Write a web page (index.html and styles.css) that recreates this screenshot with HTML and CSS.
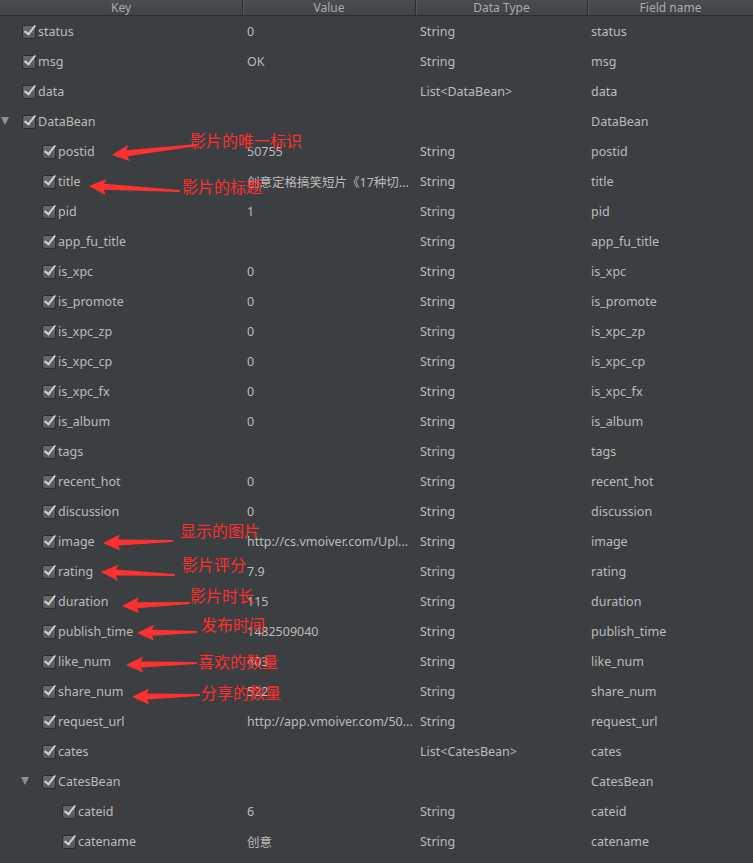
FILE: index.html
```html
<!DOCTYPE html>
<html>
<head>
<meta charset="utf-8">
<link rel="stylesheet" href="styles.css">
</head>
<body>
<div class="page">
  <div class="table">
    <div class="hdr"><div class="hc">Key</div><div class="hc">Value</div><div class="hc">Data Type</div><div class="hc">Field name</div></div>

    <div class="row"><div class="key l0"><span class="tog"></span><span class="cb"></span>status</div><div class="cell">0</div><div class="cell">String</div><div class="cell">status</div></div>
    <div class="row"><div class="key l0"><span class="tog"></span><span class="cb"></span>msg</div><div class="cell">OK</div><div class="cell">String</div><div class="cell">msg</div></div>
    <div class="row"><div class="key l0"><span class="tog"></span><span class="cb"></span>data</div><div class="cell"></div><div class="cell">List&lt;DataBean&gt;</div><div class="cell">data</div></div>
    <div class="row"><div class="key l0"><span class="tog open"></span><span class="cb"></span>DataBean</div><div class="cell"></div><div class="cell"></div><div class="cell">DataBean</div></div>

    <div class="row"><div class="key l1"><span class="tog"></span><span class="cb"></span>postid</div><div class="cell">50755</div><div class="cell">String</div><div class="cell">postid</div></div>
    <div class="row"><div class="key l1"><span class="tog"></span><span class="cb"></span>title</div><div class="cell">创意定格搞笑短片《17种切...</div><div class="cell">String</div><div class="cell">title</div></div>
    <div class="row"><div class="key l1"><span class="tog"></span><span class="cb"></span>pid</div><div class="cell">1</div><div class="cell">String</div><div class="cell">pid</div></div>
    <div class="row"><div class="key l1"><span class="tog"></span><span class="cb"></span>app_fu_title</div><div class="cell"></div><div class="cell">String</div><div class="cell">app_fu_title</div></div>
    <div class="row"><div class="key l1"><span class="tog"></span><span class="cb"></span>is_xpc</div><div class="cell">0</div><div class="cell">String</div><div class="cell">is_xpc</div></div>
    <div class="row"><div class="key l1"><span class="tog"></span><span class="cb"></span>is_promote</div><div class="cell">0</div><div class="cell">String</div><div class="cell">is_promote</div></div>
    <div class="row"><div class="key l1"><span class="tog"></span><span class="cb"></span>is_xpc_zp</div><div class="cell">0</div><div class="cell">String</div><div class="cell">is_xpc_zp</div></div>
    <div class="row"><div class="key l1"><span class="tog"></span><span class="cb"></span>is_xpc_cp</div><div class="cell">0</div><div class="cell">String</div><div class="cell">is_xpc_cp</div></div>
    <div class="row"><div class="key l1"><span class="tog"></span><span class="cb"></span>is_xpc_fx</div><div class="cell">0</div><div class="cell">String</div><div class="cell">is_xpc_fx</div></div>
    <div class="row"><div class="key l1"><span class="tog"></span><span class="cb"></span>is_album</div><div class="cell">0</div><div class="cell">String</div><div class="cell">is_album</div></div>
    <div class="row"><div class="key l1"><span class="tog"></span><span class="cb"></span>tags</div><div class="cell"></div><div class="cell">String</div><div class="cell">tags</div></div>
    <div class="row"><div class="key l1"><span class="tog"></span><span class="cb"></span>recent_hot</div><div class="cell">0</div><div class="cell">String</div><div class="cell">recent_hot</div></div>
    <div class="row"><div class="key l1"><span class="tog"></span><span class="cb"></span>discussion</div><div class="cell">0</div><div class="cell">String</div><div class="cell">discussion</div></div>
    <div class="row"><div class="key l1"><span class="tog"></span><span class="cb"></span>image</div><div class="cell">http://cs.vmoiver.com/Upl...</div><div class="cell">String</div><div class="cell">image</div></div>
    <div class="row"><div class="key l1"><span class="tog"></span><span class="cb"></span>rating</div><div class="cell">7.9</div><div class="cell">String</div><div class="cell">rating</div></div>
    <div class="row"><div class="key l1"><span class="tog"></span><span class="cb"></span>duration</div><div class="cell">115</div><div class="cell">String</div><div class="cell">duration</div></div>
    <div class="row"><div class="key l1"><span class="tog"></span><span class="cb"></span>publish_time</div><div class="cell">1482509040</div><div class="cell">String</div><div class="cell">publish_time</div></div>
    <div class="row"><div class="key l1"><span class="tog"></span><span class="cb"></span>like_num</div><div class="cell">403</div><div class="cell">String</div><div class="cell">like_num</div></div>
    <div class="row"><div class="key l1"><span class="tog"></span><span class="cb"></span>share_num</div><div class="cell">522</div><div class="cell">String</div><div class="cell">share_num</div></div>
    <div class="row"><div class="key l1"><span class="tog"></span><span class="cb"></span>request_url</div><div class="cell">http://app.vmoiver.com/50...</div><div class="cell">String</div><div class="cell">request_url</div></div>
    <div class="row"><div class="key l1"><span class="tog"></span><span class="cb"></span>cates</div><div class="cell"></div><div class="cell">List&lt;CatesBean&gt;</div><div class="cell">cates</div></div>
    <div class="row"><div class="key l1"><span class="tog open"></span><span class="cb"></span>CatesBean</div><div class="cell"></div><div class="cell"></div><div class="cell">CatesBean</div></div>
    <div class="row"><div class="key l2"><span class="tog"></span><span class="cb"></span>cateid</div><div class="cell">6</div><div class="cell">String</div><div class="cell">cateid</div></div>
    <div class="row"><div class="key l2"><span class="tog"></span><span class="cb"></span>catename</div><div class="cell">创意</div><div class="cell">String</div><div class="cell">catename</div></div>
  </div>

  <svg class="arrows" width="753" height="863" viewBox="0 0 753 863">
    <g fill="#ff3030">
      <path transform="translate(112,155) rotate(-6.7)" d="M0,0 L17,-8 L15,-3 L86,-1 L86,1 L15,3 L17,8 Z"/>
      <path transform="translate(89,186) rotate(3.1)" d="M0,0 L17,-8 L15,-3 L91,-1 L91,1 L15,3 L17,8 Z"/>
      <path transform="translate(103,543) rotate(-1.6)" d="M0,0 L17,-8 L15,-3 L70,-1 L70,1 L15,3 L17,8 Z"/>
      <path transform="translate(101,572) rotate(2.3)" d="M0,0 L17,-8 L15,-3 L74,-1 L74,1 L15,3 L17,8 Z"/>
      <path transform="translate(122,606) rotate(-2.5)" d="M0,0 L17,-8 L15,-3 L68,-1 L68,1 L15,3 L17,8 Z"/>
      <path transform="translate(137,633) rotate(-1)" d="M0,0 L17,-8 L15,-3 L60,-1 L60,1 L15,3 L17,8 Z"/>
      <path transform="translate(126,665) rotate(-1.6)" d="M0,0 L17,-8 L15,-3 L71,-1 L71,1 L15,3 L17,8 Z"/>
      <path transform="translate(132,697) rotate(-1.7)" d="M0,0 L17,-8 L15,-3 L68,-1 L68,1 L15,3 L17,8 Z"/>
    </g>
  </svg>
  <div class="note n1">影片的唯一标识</div>
  <div class="note n2">影片的标题</div>
  <div class="note n3">显示的图片</div>
  <div class="note n4">影片评分</div>
  <div class="note n5">影片时长</div>
  <div class="note n6">发布时间</div>
  <div class="note n7">喜欢的数量</div>
  <div class="note n8">分享的数量</div>
</div>
</body>
</html>
```

FILE: styles.css
```css
* { box-sizing: border-box; }
html, body {
  margin: 0;
  padding: 0;
  background: #3c3f41;
}
body {
  width: 753px;
  height: 863px;
  overflow: hidden;
  font-family: "Noto Sans", "Noto Sans CJK SC", sans-serif;
  font-size: 12.5px;
  color: #bbbbbb;
}
.page {
  position: relative;
  width: 753px;
  height: 863px;
}
.table {
  display: flex;
  flex-direction: column;
}
.hdr, .row {
  display: grid;
  grid-template-columns: 242px 173px 172px 166px;
}
.hdr {
  height: 16px;
  background: linear-gradient(#4a4d4f, #414446);
  border-bottom: 1px solid #2b2d2e;
  color: #a9abad;
  font-size: 12px;
  line-height: 15px;
}
.hc {
  text-align: center;
  border-left: 1px solid #2c2e2f;
  box-shadow: inset 1px 0 0 #555859;
}
.hc:first-child { border-left: none; box-shadow: none; }
.row {
  height: 30px;
  align-items: center;
  white-space: nowrap;
}
.cell {
  padding-left: 5px;
  overflow: hidden;
}
.cell:last-child { padding-left: 4px; }
.key {
  display: flex;
  align-items: center;
}
.l0 { padding-left: 1px; }
.l1 { padding-left: 21px; }
.l2 { padding-left: 41px; }
.tog {
  width: 21px;
  height: 8px;
  flex: none;
  position: relative;
}
.tog.open::before {
  content: "";
  position: absolute;
  left: 0;
  top: 0;
  border-left: 4.5px solid transparent;
  border-right: 4.5px solid transparent;
  border-top: 8px solid #8e9092;
}
.cb {
  width: 14px;
  height: 14px;
  flex: none;
  margin-right: 2px;
  margin-top: 2px;
  position: relative;
  background: linear-gradient(#65686a, #575a5c);
  border: 1px solid #2a2c2d;
  border-radius: 2px;
}
.cb::after {
  content: "";
  position: absolute;
  left: 4px;
  top: -3px;
  width: 4px;
  height: 10px;
  border-right: 2px solid #d2d2d2;
  border-bottom: 2px solid #d2d2d2;
  transform: rotate(38deg);
}
.arrows {
  position: absolute;
  left: 0;
  top: 0;
  pointer-events: none;
}
.note {
  position: absolute;
  font-family: "Noto Sans CJK SC", sans-serif;
  font-size: 16px;
  line-height: 16px;
  color: #ff2e2e;
  white-space: nowrap;
}
.n1 { left: 190px; top: 132px; }
.n2 { left: 182px; top: 178px; }
.n3 { left: 180px; top: 522px; }
.n4 { left: 182px; top: 556px; }
.n5 { left: 190px; top: 587px; }
.n6 { left: 201px; top: 616px; }
.n7 { left: 198px; top: 653px; }
.n8 { left: 201px; top: 684px; }
```
